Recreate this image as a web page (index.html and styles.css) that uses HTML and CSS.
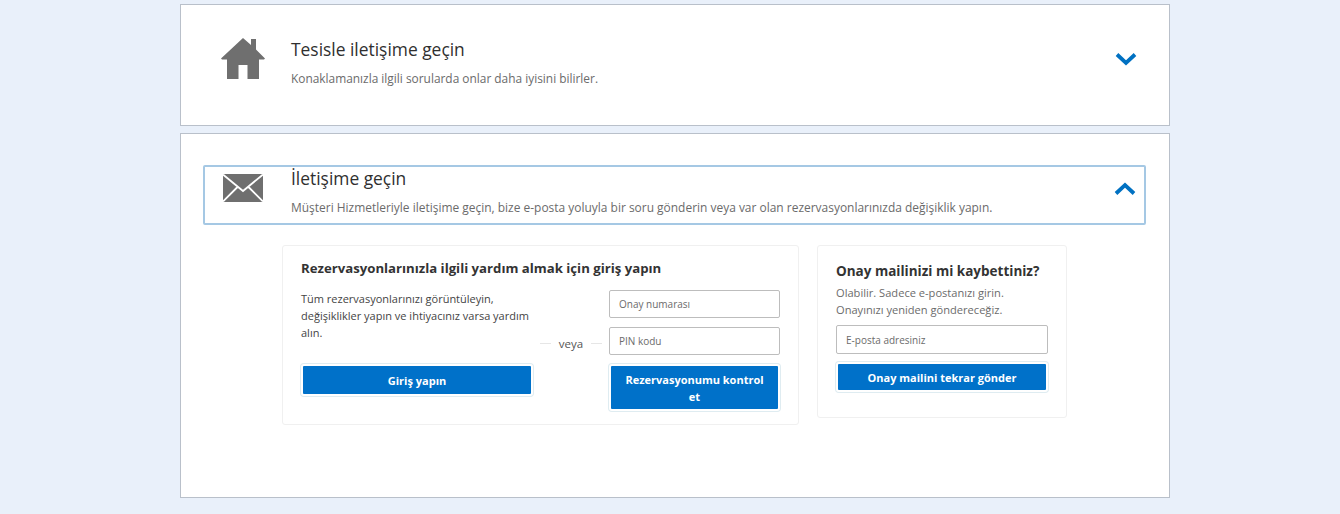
FILE: index.html
```html
<!DOCTYPE html>
<html lang="tr">
<head>
<meta charset="utf-8">
<title>İletişim</title>
<link rel="stylesheet" href="styles.css">
</head>
<body>
<main class="page">
  <section class="card card-top">
    <div class="row">
      <div class="row-icon">
        <svg class="icon-home" viewBox="0 0 44 42" width="44" height="42"><path fill="#6f6f6f" d="M22 0 L30 7 V1 H35 V11.500 L44 20.500 L43 21.500 H38 V41 H26.500 V27 H17.500 V41 H6 V21.500 H1 L0 20.500 Z"/></svg>
      </div>
      <div class="row-text">
        <h2 class="row-title">Tesisle iletişime geçin</h2>
        <p class="row-sub">Konaklamanızla ilgili sorularda onlar daha iyisini bilirler.</p>
      </div>
      <svg class="chevron" viewBox="0 0 22 14" width="22" height="14"><path d="M2 2.500 L11 11 L20 2.500" fill="none" stroke="#0071c2" stroke-width="3.800"/></svg>
    </div>
  </section>
  <section class="card card-bottom">
    <div class="row row-open">
      <div class="row-icon">
        <svg class="icon-mail" viewBox="0 0 40 28" width="40" height="28"><rect width="40" height="28" fill="#6f6f6f"/><path d="M0 0.500 L20 17 L40 0.500 M0 27.500 L14.500 13 M40 27.500 L25.500 13" fill="none" stroke="#fff" stroke-width="1.800"/></svg>
      </div>
      <div class="row-text">
        <h2 class="row-title">İletişime geçin</h2>
        <p class="row-sub">Müşteri Hizmetleriyle iletişime geçin, bize e-posta yoluyla bir soru gönderin veya var olan rezervasyonlarınızda değişiklik yapın.</p>
      </div>
      <svg class="chevron" viewBox="0 0 22 14" width="22" height="14"><path d="M2 11.500 L11 3 L20 11.500" fill="none" stroke="#0071c2" stroke-width="3.800"/></svg>
    </div>
    <div class="panels">
      <div class="panel panel-login">
        <h3 class="panel-title">Rezervasyonlarınızla ilgili yardım almak için giriş yapın</h3>
        <div class="login-cols">
          <div class="login-left">
            <p class="login-copy">Tüm rezervasyonlarınızı görüntüleyin, değişiklikler yapın ve ihtiyacınız varsa yardım alın.</p>
            <button class="btn">Giriş yapın</button>
          </div>
          <div class="or"><span class="or-line"></span><span class="or-text">veya</span><span class="or-line"></span></div>
          <div class="login-right">
            <input class="field" placeholder="Onay numarası">
            <input class="field" placeholder="PIN kodu">
            <button class="btn">Rezervasyonumu kontrol et</button>
          </div>
        </div>
      </div>
      <div class="panel panel-mail">
        <h3 class="panel-title">Onay mailinizi mi kaybettiniz?</h3>
        <p class="mail-copy">Olabilir. Sadece e-postanızı girin.<br>Onayınızı yeniden göndereceğiz.</p>
        <input class="field" placeholder="E-posta adresiniz">
        <button class="btn">Onay mailini tekrar gönder</button>
      </div>
    </div>
  </section>
</main>
</body>
</html>
```
FILE: styles.css
```css
* { box-sizing: border-box; }
html, body { margin: 0; padding: 0; }
body {
  background: #e9f0fa;
  font-family: "Open Sans", "Noto Sans", sans-serif;
  color: #333;
  height: 514px;
  overflow: hidden;
}
.page {
  width: 990px;
  margin: 0 0 0 180px;
  padding-top: 4px;
  display: flex;
  flex-direction: column;
  gap: 7px;
}
.card {
  background: #fff;
  border: 1px solid #b9c0ca;
}
.card-top { height: 122px; padding: 30px 22px 0; }
.card-bottom { height: 365px; padding: 31px 23px 0 22px; }
.row {
  display: flex;
  align-items: flex-start;
  position: relative;
}
.row-icon {
  width: 88px;
  flex: none;
  padding-left: 18px;
}
.row-icon svg { display: block; }
.row-text { flex: 1; }
.row-title {
  margin: 0;
  font-size: 17.400px;
  font-weight: 400;
  line-height: 28px;
  color: #2f2f2f;
}
.row-sub {
  margin: 4px 0 0;
  font-size: 11.900px;
  line-height: 22px;
  color: #6b6b6b;
}
.icon-home { margin-top: 3px; }
.chevron { flex: none; margin: 17px 10px 0 1px; }
.row-open {
  height: 60px;
  border: 2px solid #a5c8e4;
  border-radius: 2px;
}
.row-open .row-icon { width: 87px; margin-left: -1px; padding-top: 7px; padding-left: 19px; }
.row-open .row-title { margin-top: -3px; }
.row-open .row-sub { margin-top: 5px; font-size: 11.960px; }
.row-open .chevron { margin: 15px 8px 0 1px; }
.panels {
  display: flex;
  align-items: flex-start;
  gap: 18px;
  margin: 20px 0 0 79px;
}
.panel {
  background: #fff;
  border: 1px solid #f0f0f0;
  border-radius: 3px;
}
.panel-login { width: 517px; height: 180px; padding: 12px 18px 0; }
.panel-mail { width: 250px; height: 173px; padding: 15px 18px 0; display: flex; flex-direction: column; }
.panel-title {
  margin: 0;
  font-size: 13.200px;
  font-weight: 700;
  line-height: 20px;
  color: #333;
}
.panel-mail .panel-title { font-size: 13.500px; }
.login-cols { display: flex; margin-top: 12px; height: 125px; }
.login-left { width: 232px; display: flex; flex-direction: column; justify-content: flex-start; gap: 23px; }
.login-copy { margin: 0; font-size: 11px; line-height: 17px; color: #444; }
.or {
  width: 76px;
  display: flex;
  align-items: center;
  justify-content: center;
  gap: 5px;
  height: 106px;
}
.or-line { width: 11px; height: 1px; background: #e6e6e6; }
.or-text { font-size: 11.500px; color: #555; padding: 0 3px; }
.login-right { width: 171px; display: flex; flex-direction: column; gap: 9px; }
.field {
  display: block;
  width: 100%;
  height: 28px;
  border: 1px solid #bdbdbd;
  border-radius: 2px;
  padding: 0 9px;
  font: 10px "Open Sans", "Noto Sans", sans-serif;
  background: #fff;
  color: #333;
}
.field::placeholder { color: #6b6b6b; opacity: 1; }
.btn {
  display: block;
  width: 100%;
  background: #0071c9;
  color: #fff;
  border: 2px solid #fff;
  box-shadow: 0 0 0 1px #dfecf1;
  border-radius: 3px;
  padding: 6px 8px;
  font: 700 11px/17px "Open Sans", "Noto Sans", sans-serif;
  text-align: center;
}
.login-left .btn { height: 32px; }
.login-right .btn { height: 47px; padding: 4px 8px; }
.mail-copy { margin: 3px 0 0; font-size: 11.100px; line-height: 17px; color: #6b6b6b; }
.panel-mail .field { margin-top: 7px; height: 29px; }
.panel-mail .btn { margin-top: 8px; padding: 3px 8px; height: 30px; }
```
